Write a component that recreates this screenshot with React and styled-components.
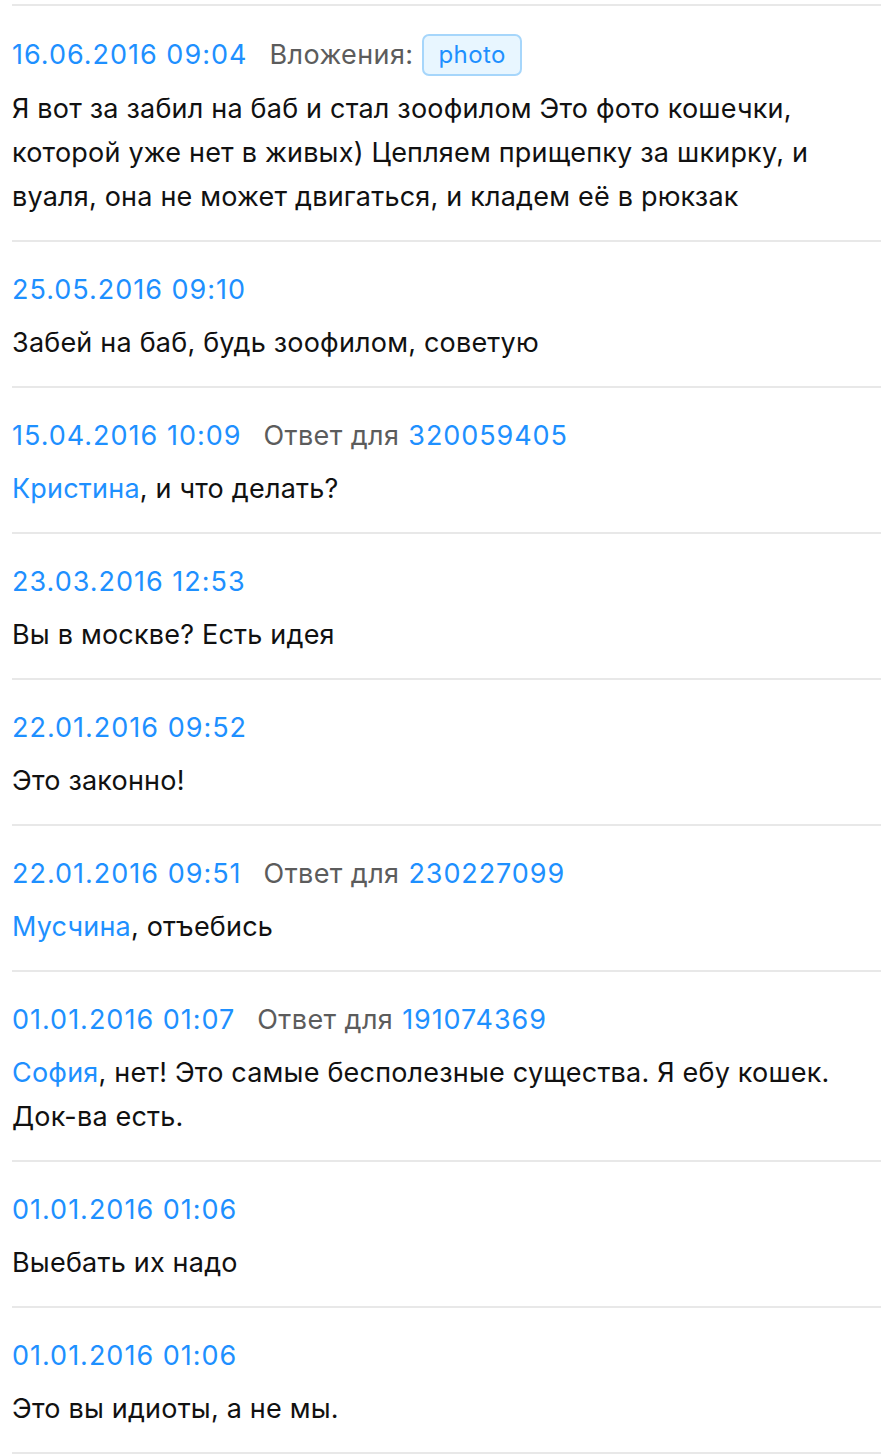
import styled, { createGlobalStyle } from 'styled-components'

const GlobalStyle = createGlobalStyle`
    html, body {
        margin: 0;
        padding: 0;
        background: #ffffff;
    }
    body {
        font-family: Inter, "Noto Sans", Roboto, sans-serif;
        -webkit-font-smoothing: antialiased;
    }
`

const List = styled.main`
    padding: 4px 11px 0 12px;
`

const Post = styled.article`
    display: grid;
    gap: 9px;
    padding: 26px 0 21px;
    border-top: 2px solid #e8e8e8;

    &:last-child {
        border-bottom: 2px solid #e8e8e8;
    }
`

const Header = styled.div`
    display: flex;
    align-items: center;
    gap: 22px;
    min-height: 44px;
    font-size: 27px;
    line-height: 44px;
`

const Date = styled.span`
    color: #1e90ff;
    letter-spacing: 1px;
`

const Meta = styled.span`
    display: flex;
    align-items: center;
    gap: 9px;
    color: #5c5c5c;
    letter-spacing: 0.4px;
`

const Link = styled.a`
    color: #1e90ff;
    text-decoration: none;
    letter-spacing: ${(p) => (p.$number ? '0.9px' : 'inherit')};
`

const Badge = styled.span`
    display: inline-flex;
    align-items: center;
    height: 38px;
    margin: 2px 0;
    padding: 0 14px;
    border: 2px solid #a6d6fb;
    border-radius: 7px;
    background: #e8f6ff;
    color: #1e90ff;
    font-size: 24px;
`

const Body = styled.p`
    margin: 0;
    font-size: 27px;
    line-height: 44px;
    letter-spacing: 0.2px;
    color: #111111;
`

const posts = [
    {
        date: '16.06.2016 09:04',
        attach: 'photo',
        text: 'Я вот за забил на баб и стал зоофилом Это фото кошечки, которой уже нет в живых) Цепляем прищепку за шкирку, и вуаля, она не может двигаться, и кладем её в рюкзак',
    },
    { date: '25.05.2016 09:10', text: 'Забей на баб, будь зоофилом, советую' },
    { date: '15.04.2016 10:09', reply: '320059405', name: 'Кристина', text: ', и что делать?' },
    { date: '23.03.2016 12:53', text: 'Вы в москве? Есть идея' },
    { date: '22.01.2016 09:52', text: 'Это законно!' },
    { date: '22.01.2016 09:51', reply: '230227099', name: 'Мусчина', text: ', отъебись' },
    {
        date: '01.01.2016 01:07',
        reply: '191074369',
        name: 'София',
        text: ', нет! Это самые бесполезные существа. Я ебу кошек. Док-ва есть.',
    },
    { date: '01.01.2016 01:06', text: 'Выебать их надо' },
    { date: '01.01.2016 01:06', text: 'Это вы идиоты, а не мы.' },
]

export default function App() {
    return (
        <>
            <GlobalStyle />
            <List>
                {posts.map((post, i) => (
                    <Post key={i}>
                        <Header>
                            <Date>{post.date}</Date>
                            {post.attach && (
                                <Meta>
                                    Вложения: <Badge>{post.attach}</Badge>
                                </Meta>
                            )}
                            {post.reply && (
                                <Meta>
                                    Ответ для <Link href="#" $number>{post.reply}</Link>
                                </Meta>
                            )}
                        </Header>
                        <Body>
                            {post.name && <Link href="#">{post.name}</Link>}
                            {post.text}
                        </Body>
                    </Post>
                ))}
            </List>
        </>
    )
}
